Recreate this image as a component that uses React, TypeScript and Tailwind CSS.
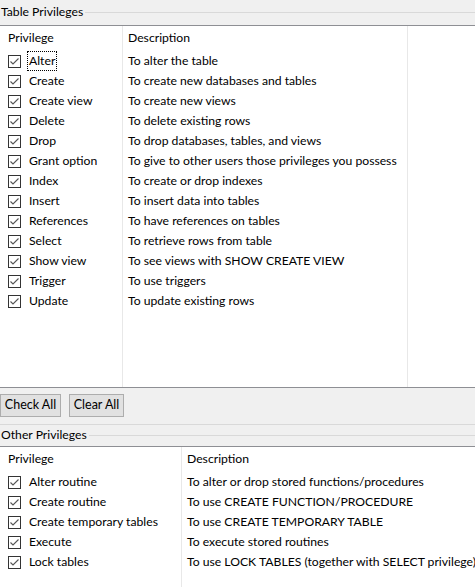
import React from "react";

const tablePrivs: [string, string][] = [
  ["Alter", "To alter the table"],
  ["Create", "To create new databases and tables"],
  ["Create view", "To create new views"],
  ["Delete", "To delete existing rows"],
  ["Drop", "To drop databases, tables, and views"],
  ["Grant option", "To give to other users those privileges you possess"],
  ["Index", "To create or drop indexes"],
  ["Insert", "To insert data into tables"],
  ["References", "To have references on tables"],
  ["Select", "To retrieve rows from table"],
  ["Show view", "To see views with SHOW CREATE VIEW"],
  ["Trigger", "To use triggers"],
  ["Update", "To update existing rows"],
];

const otherPrivs: [string, string][] = [
  ["Alter routine", "To alter or drop stored functions/procedures"],
  ["Create routine", "To use CREATE FUNCTION/PROCEDURE"],
  ["Create temporary tables", "To use CREATE TEMPORARY TABLE"],
  ["Execute", "To execute stored routines"],
  ["Lock tables", "To use LOCK TABLES (together with SELECT privilege)"],
];

function Check() {
  return (
    <span className="w-[13px] h-[13px] border border-[#333] bg-white flex items-center justify-center shrink-0">
      <svg width="11" height="11" viewBox="0 0 11 11">
        <path d="M1.5 5.5 L4 8 L9.5 2.5" stroke="#555" strokeWidth="1.1" fill="none" />
      </svg>
    </span>
  );
}

function GroupTitle({ title }: { title: string }) {
  return (
    <div className="flex items-center h-[20px]">
      <span className="pl-[1px] pr-[2px]">{title}</span>
      <div className="flex-1 h-px bg-[#d9d9d9]" />
    </div>
  );
}

function PrivTable({
  rows,
  col1,
  col2,
  height,
  focus,
}: {
  rows: [string, string][];
  col1: number;
  col2?: number;
  height: number;
  focus?: boolean;
}) {
  return (
    <div
      className="relative bg-white border-t border-[#8e8f94] flex"
      style={{ height }}
    >
      <div className="shrink-0 border-r border-[#e8e8e8]" style={{ width: col1 }}>
        <div className="h-[25px] pl-[8px] flex items-center">Privilege</div>
        {rows.map(([name], i) => (
          <div key={name} className="h-[20px] pl-[8px] flex items-center">
            <Check />
            <span
              className={
                "ml-[7px] px-[1px] " +
                (focus && i === 0 ? "outline outline-1 outline-dotted outline-black" : "")
              }
            >
              {name}
            </span>
          </div>
        ))}
      </div>
      <div
        className={"shrink-0 " + (col2 ? "border-r border-[#e8e8e8]" : "flex-1")}
        style={col2 ? { width: col2 } : undefined}
      >
        <div className="h-[25px] pl-[5px] flex items-center whitespace-nowrap">Description</div>
        {rows.map(([name, desc]) => (
          <div key={name} className="h-[20px] pl-[5px] flex items-center whitespace-nowrap">
            {desc}
          </div>
        ))}
      </div>
    </div>
  );
}

export default function App() {
  return (
    <div
      className="w-[475px] h-[587px] overflow-hidden bg-[#f0f0f0] text-[12.2px] text-black"
      style={{ fontFamily: 'Lato, "Noto Sans", sans-serif' }}
    >
      <div className="pt-[2px] h-[25px]">
        <GroupTitle title="Table Privileges" />
      </div>
      <PrivTable rows={tablePrivs} col1={123} col2={285} height={362} focus />
      <div className="border-t border-[#8e8f94] h-[37px] flex items-start gap-[8px] pt-[6px]">
        <button className="h-[23px] w-[61px] bg-[#e1e1e1] border border-[#adadad] text-[12.5px]">
          Check All
        </button>
        <button className="h-[23px] w-[55px] bg-[#e1e1e1] border border-[#adadad] text-[12.5px]">
          Clear All
        </button>
      </div>
      <div className="border-t border-[#d9d9d9] h-[22px]">
        <GroupTitle title="Other Privileges" />
      </div>
      <PrivTable rows={otherPrivs} col1={182} height={141} />
    </div>
  );
}
